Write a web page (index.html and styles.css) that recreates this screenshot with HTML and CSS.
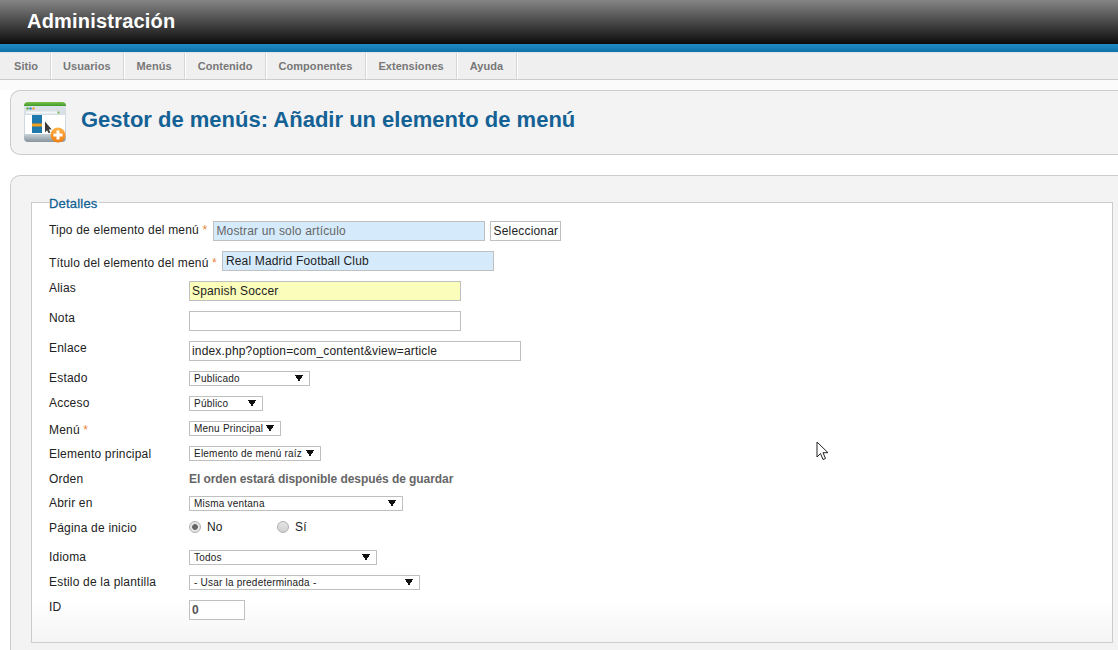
FILE: index.html
```html
<!DOCTYPE html>
<html lang="es">
<head>
<meta charset="utf-8">
<title>Gestor de menús: Añadir un elemento de menú</title>
<link rel="stylesheet" href="styles.css">
</head>
<body>
<header class="top"><span class="brand">Administración</span></header>
<div class="stripe"></div>
<nav class="menu">
  <a class="tab">Sitio</a><a class="tab">Usuarios</a><a class="tab">Menús</a><a class="tab">Contenido</a><a class="tab">Componentes</a><a class="tab">Extensiones</a><a class="tab">Ayuda</a>
</nav>
<section class="toolbar">
  <svg class="logo" width="44" height="44" viewBox="0 0 44 44">
    <defs>
      <linearGradient id="g1" x1="0" y1="0" x2="0" y2="1"><stop offset="0" stop-color="#7cc04a"/><stop offset="1" stop-color="#3f9a2c"/></linearGradient>
      <linearGradient id="g2" x1="0" y1="0" x2="0" y2="1"><stop offset="0" stop-color="#dfe6ea"/><stop offset="0.8" stop-color="#c8d2d8"/><stop offset="1" stop-color="#87949c"/></linearGradient>
      <linearGradient id="g3" x1="0" y1="0" x2="0" y2="1"><stop offset="0" stop-color="#ffb34a"/><stop offset="1" stop-color="#ee7d10"/></linearGradient>
    </defs>
    <rect x="1" y="1" width="42" height="40" rx="4" fill="url(#g2)"/>
    <path d="M1 5a4 4 0 0 1 4-4h34a4 4 0 0 1 4 4z" fill="url(#g1)"/>
    <circle cx="4.500" cy="7.500" r="1.200" fill="#6aa84f"/><circle cx="7.500" cy="7.500" r="1.200" fill="#2f8fc4"/><circle cx="10.500" cy="7.500" r="1.200" fill="#f0a030"/>
    <rect x="3" y="10.500" width="34" height="2" fill="#f5f8f9"/>
    <rect x="34.500" y="10.500" width="2" height="2" fill="#6fb04a"/>
    <rect x="2" y="14" width="40" height="19" fill="#fff"/>
    <rect x="9" y="14" width="10" height="18" fill="#1c78ad"/>
    <rect x="9" y="22.500" width="10" height="3" fill="#f3a01f"/>
    <path d="M22 20.500v11l2-2.200 1.700 3 1.700-.9-1.700-3h3z" fill="#3a3a3a"/>
    <circle cx="35" cy="34" r="7.500" fill="url(#g3)"/>
    <path d="M33.500 29.500h3v3h3v3h-3v3h-3v-3h-3v-3h3z" fill="#fff"/>
  </svg>
  <h1 class="title">Gestor de menús: Añadir un elemento de menú</h1>
</section>
<main class="panel">
  <fieldset class="details">
    <legend class="legend">Detalles</legend>
    <div class="row row-inline first">
      <label class="lab lab-inline">Tipo de elemento del menú <em class="req">*</em></label>
      <input class="field type-field readonly" value="Mostrar un solo artículo" readonly>
      <button class="pick" type="button">Seleccionar</button>
    </div>
    <div class="row row-inline">
      <label class="lab lab-inline lower">Título del elemento del menú <em class="req">*</em></label>
      <input class="field type-field blue" value="Real Madrid Football Club">
    </div>
    <div class="row row-text">
      <label class="lab">Alias</label>
      <input class="field w272 yellow" value="Spanish Soccer">
    </div>
    <div class="row row-text">
      <label class="lab">Nota</label>
      <input class="field w272">
    </div>
    <div class="row row-text">
      <label class="lab">Enlace</label>
      <input class="field w332" value="index.php?option=com_content&amp;view=article">
    </div>
    <div class="row row-sel">
      <label class="lab">Estado</label>
      <select class="sel w121"><option>Publicado</option></select>
    </div>
    <div class="row row-sel">
      <label class="lab">Acceso</label>
      <select class="sel w74"><option>Público</option></select>
    </div>
    <div class="row row-sel">
      <label class="lab lab-low">Menú <em class="req">*</em></label>
      <select class="sel w92"><option>Menu Principal</option></select>
    </div>
    <div class="row row-sel">
      <label class="lab lab-mid">Elemento principal</label>
      <select class="sel w132"><option>Elemento de menú raíz</option></select>
    </div>
    <div class="row row-order">
      <label class="lab">Orden</label>
      <span class="note">El orden estará disponible después de guardar</span>
    </div>
    <div class="row row-sel">
      <label class="lab">Abrir en</label>
      <select class="sel w214"><option>Misma ventana</option></select>
    </div>
    <div class="row row-radio">
      <label class="lab">Página de inicio</label>
      <span class="opt opt-no"><input class="radio" type="radio" name="home" checked>No</span>
      <span class="opt"><input class="radio" type="radio" name="home">Sí</span>
    </div>
    <div class="row row-sel">
      <label class="lab">Idioma</label>
      <select class="sel w188"><option>Todos</option></select>
    </div>
    <div class="row row-sel">
      <label class="lab">Estilo de la plantilla</label>
      <select class="sel w231"><option>- Usar la predeterminada -</option></select>
    </div>
    <div class="row row-text">
      <label class="lab">ID</label>
      <input class="field w56 bold" value="0" readonly>
    </div>
  </fieldset>
</main>
<svg class="cursor" width="14" height="20" viewBox="0 0 14 20">
  <path d="M1 1v15l3.500-3.500 2.500 6 2.500-1-2.500-5.800h5z" fill="#fff" stroke="#222" stroke-width="1"/>
</svg>
</body>
</html>
```

FILE: styles.css
```css
html, body {
  margin: 0;
  padding: 0;
  height: 650px;
  overflow: hidden;
  background: #fff;
  font-family: "Liberation Sans", Arial, sans-serif;
  font-size: 12px;
  color: #222;
}
.top {
  height: 44px;
  background: linear-gradient(#858585, #0c0c0c);
  display: flex;
  align-items: flex-start;
  padding-left: 27px;
}
.brand {
  margin-top: 10px;
  color: #fff;
  font-size: 20px;
  line-height: 23px;
  letter-spacing: 0.2px;
  font-weight: bold;
}
.stripe {
  height: 9px;
  background: linear-gradient(#1d8dc5, #0f6ea3);
}
.menu {
  display: flex;
  height: 26px;
  padding-left: 1px;
  background: #efefef;
  border-top: 1px solid #dfe6ea;
  border-bottom: 1px solid #ccc;
  margin-top: -1px;
  box-shadow: 0 10px 0 #fbfbfb;
}
.tab {
  padding: 0 12.500px;
  line-height: 26px;
  font-size: 11px;
  font-weight: bold;
  letter-spacing: 0.05px;
  color: #777;
  border-right: 1px solid #d6d6d6;
  box-shadow: 1px 0 0 #fff;
}
.tab:first-child { padding: 0 11.500px 0 13px; }
.toolbar {
  display: flex;
  align-items: center;
  height: 63px;
  width: 1096px;
  margin: 10px 0 0 10px;
  padding-left: 12px;
  background: #f3f3f3;
  border: 1px solid #ccc;
  border-right: 0;
  border-radius: 10px 0 0 10px;
}
.logo { flex: none; }
.title {
  margin: 0 0 6px 14px;
  font-size: 22px;
  font-weight: bold;
  color: #146295;
}
.panel {
  width: 1108px;
  height: 480px;
  margin: 20px 0 0 10px;
  padding: 18px 5px 0 20px;
  background: #f3f3f3;
  border: 1px solid #ccc;
  border-right: 0;
  border-radius: 10px 0 0 0;
  box-sizing: border-box;
}
.details {
  margin: 0;
  padding: 0 0 0 17px;
  height: 449px;
  min-width: 0;
  box-sizing: border-box;
  border: 1px solid #ccc;
  background: linear-gradient(#fff 90%, #f5f5f5);
}
.legend {
  padding: 2px 1px 0 0;
  font-size: 13px;
  line-height: 15px;
  letter-spacing: 0.2px;
  font-weight: normal;
  -webkit-text-stroke: 0.3px #146295;
  color: #146295;
}
.row { display: flex; align-items: flex-start; }
.row-inline { height: 30px; }
.first { margin-top: 10px; }
.row-text { height: 30px; }
.row-sel { height: 25px; }
.row-order { height: 25px; }
.row-radio { height: 29px; }
.lab {
  flex: none;
  width: 140px;
  line-height: 14px;
  letter-spacing: 0.2px;
}
.lab-inline { width: auto; margin-top: 2px; margin-right: 6px; }
.lower { margin-top: 5px; margin-right: 5px; letter-spacing: 0.17px; }
.row-sel .lab-low { margin-top: 2px; }
.row-sel .lab-mid { margin-top: 1px; }
.row-order .lab { margin-top: 1px; }
.req { color: #e8843c; font-style: normal; }
.field {
  box-sizing: border-box;
  height: 20px;
  padding: 0 2px;
  border: 1px solid #c0c0c0;
  font: 12px "Liberation Sans", Arial, sans-serif;
  letter-spacing: 0.17px;
  color: #222;
  background: #fff;
  outline: 0;
}
.type-field { width: 272px; background: #d5ebfc; }
.readonly { color: #666; }
.blue { padding-left: 3px; }
.yellow { background: #fbfdba; }
.w272 { width: 272px; }
.w332 { width: 332px; }
.w56 { width: 56px; }
.bold { font-weight: bold; color: #555; }
.pick {
  box-sizing: border-box;
  margin-left: 5px;
  width: 71px;
  height: 20px;
  padding: 0;
  border: 1px solid #c0c0c0;
  background: #fff;
  font: 12px "Liberation Sans", Arial, sans-serif;
  letter-spacing: 0.17px;
  color: #222;
}
.sel {
  box-sizing: border-box;
  height: 15px;
  padding: 0 0 0 4px;
  border: 1px solid #c0c0c0;
  border-radius: 0;
  appearance: none;
  -webkit-appearance: none;
  font: 10px "Liberation Sans", Arial, sans-serif;
  letter-spacing: 0.22px;
  color: #222;
  background-color: #fff;
  background-image: linear-gradient(to bottom right, #111 50%, transparent 50%), linear-gradient(to bottom left, #111 50%, transparent 50%);
  background-size: 4px 7px, 4px 7px;
  background-position: right 6px top 3px, right 10px top 3px;
  background-repeat: no-repeat;
  line-height: 13px;
}
.w121 { width: 121px; }
.w74 { width: 74px; }
.w92 { width: 92px; }
.w132 { width: 132px; }
.w214 { width: 214px; }
.w188 { width: 188px; }
.w231 { width: 231px; }
.note { font-weight: bold; color: #666; line-height: 14px; margin-top: 1px; letter-spacing: -0.07px; }
.opt { display: flex; align-items: center; line-height: 14px; margin-top: -1px; letter-spacing: 0.2px; }
.opt-no { width: 88px; }
.radio {
  appearance: none;
  -webkit-appearance: none;
  box-sizing: border-box;
  width: 12px;
  height: 12px;
  margin: 0 6px 0 0;
  border: 1px solid #b0b0b0;
  border-radius: 50%;
  background: linear-gradient(#e4e4e4, #d0d0d0);
}
.radio:checked {
  background: radial-gradient(circle, #666 0 2.500px, #e6e6e6 3.200px);
}
.cursor {
  position: absolute;
  left: 816px;
  top: 441px;
}
```
